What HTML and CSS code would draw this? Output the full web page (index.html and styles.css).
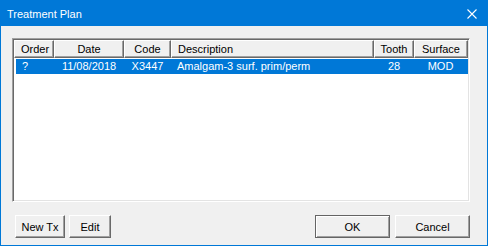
FILE: index.html
```html
<!DOCTYPE html>
<html lang="en">
<head>
    <meta charset="UTF-8">
    <title>Treatment Plan</title>
    <link rel="stylesheet" href="styles.css">
</head>
<body>

    <div class="dialog">
        <div class="titlebar">
            <span class="title">Treatment Plan</span>
            <svg class="close" width="10" height="10" viewBox="0 0 10 10">
                <path d="M0.5 0.5 L9.5 9.5 M9.5 0.5 L0.5 9.5" stroke="#fff" stroke-width="1.1" fill="none"/>
            </svg>
        </div>

        <div class="content">
            <div class="listbox">
                <div class="list-header">
                    <div class="col left">Order</div>
                    <div class="col">Date</div>
                    <div class="col">Code</div>
                    <div class="col left">Description</div>
                    <div class="col">Tooth</div>
                    <div class="col">Surface</div>
                </div>
                <div class="list-row selected">
                    <div class="cell left">?</div>
                    <div class="cell">11/08/2018</div>
                    <div class="cell">X3447</div>
                    <div class="cell left">Amalgam-3 surf. prim/perm</div>
                    <div class="cell">28</div>
                    <div class="cell">MOD</div>
                </div>
            </div>

            <div class="buttons">
                <div class="group">
                    <button class="btn btn-new">New Tx</button>
                    <button class="btn btn-edit">Edit</button>
                </div>
                <div class="group">
                    <button class="btn btn-wide default">OK</button>
                    <button class="btn btn-wide">Cancel</button>
                </div>
            </div>
        </div>
    </div>

</body>
</html>
```

FILE: styles.css
```css
* { box-sizing: border-box; margin: 0; padding: 0; font-family: "Liberation Sans", Arial, sans-serif; }
body {
    background: #f0f0f0;
}
.dialog {
    width: 488px;
    height: 246px;
    border: 1px solid #0078d7;
    border-top: none;
    background: #f0f0f0;
    display: flex;
    flex-direction: column;
}
.titlebar {
    height: 26px;
    background: #0078d7;
    display: flex;
    align-items: center;
    justify-content: space-between;
    padding: 1px 10px 0 6px;
}
.title {
    color: white;
    font-size: 11px;
}
.close {
    display: block;
}
.content {
    padding: 12px 17px 0 11px;
    font-size: 11px;
    color: #000;
}
.listbox {
    width: 458px;
    height: 164px;
    background: white;
    border: 1px solid;
    border-color: #a0a0a0 #fff #fff #a0a0a0;
    box-shadow: inset 1px 1px 0 #696969, inset -1px -1px 0 #e3e3e3;
    padding: 1px;
}
.list-header,
.list-row {
    display: grid;
    grid-template-columns: 40px 70px 47px 203px 40px 54px;
}
.col {
    height: 18px;
    line-height: 16px;
    text-align: center;
    background: #f0f0f0;
    border: 1px solid;
    border-color: #fff #696969 #696969 #fff;
    box-shadow: inset -1px -1px 0 #a0a0a0;
    white-space: nowrap;
    overflow: hidden;
}
.col.left {
    text-align: left;
    padding-left: 6px;
}
.list-row {
    margin: 1px 0 0 2px;
    grid-template-columns: 38px 70px 47px 203px 40px 53px;
    height: 15px;
    line-height: 15px;
}
.list-row.selected {
    background: #0078d7;
    color: white;
}
.cell {
    text-align: center;
    white-space: nowrap;
    overflow: hidden;
}
.cell.left {
    text-align: left;
    padding-left: 6px;
}
.buttons {
    display: flex;
    justify-content: space-between;
    margin-top: 13px;
    padding-left: 3px;
}
.group {
    display: flex;
    gap: 5px;
}
.btn {
    height: 23px;
    background: #f0f0f0;
    font-size: 11px;
    color: #000;
    border: 1px solid;
    border-color: #fff #696969 #696969 #fff;
    box-shadow: inset -1px -1px 0 #a0a0a0;
}
.btn-new { width: 50px; }
.btn-edit { width: 42px; margin-left: -1px; }
.btn-wide { width: 75px; }
.btn.default {
    outline: 1px solid #646464;
    outline-offset: -1px;
    border-color: #646464;
    box-shadow: inset 1px 1px 0 #fff, inset -1px -1px 0 #a0a0a0;
}
```
